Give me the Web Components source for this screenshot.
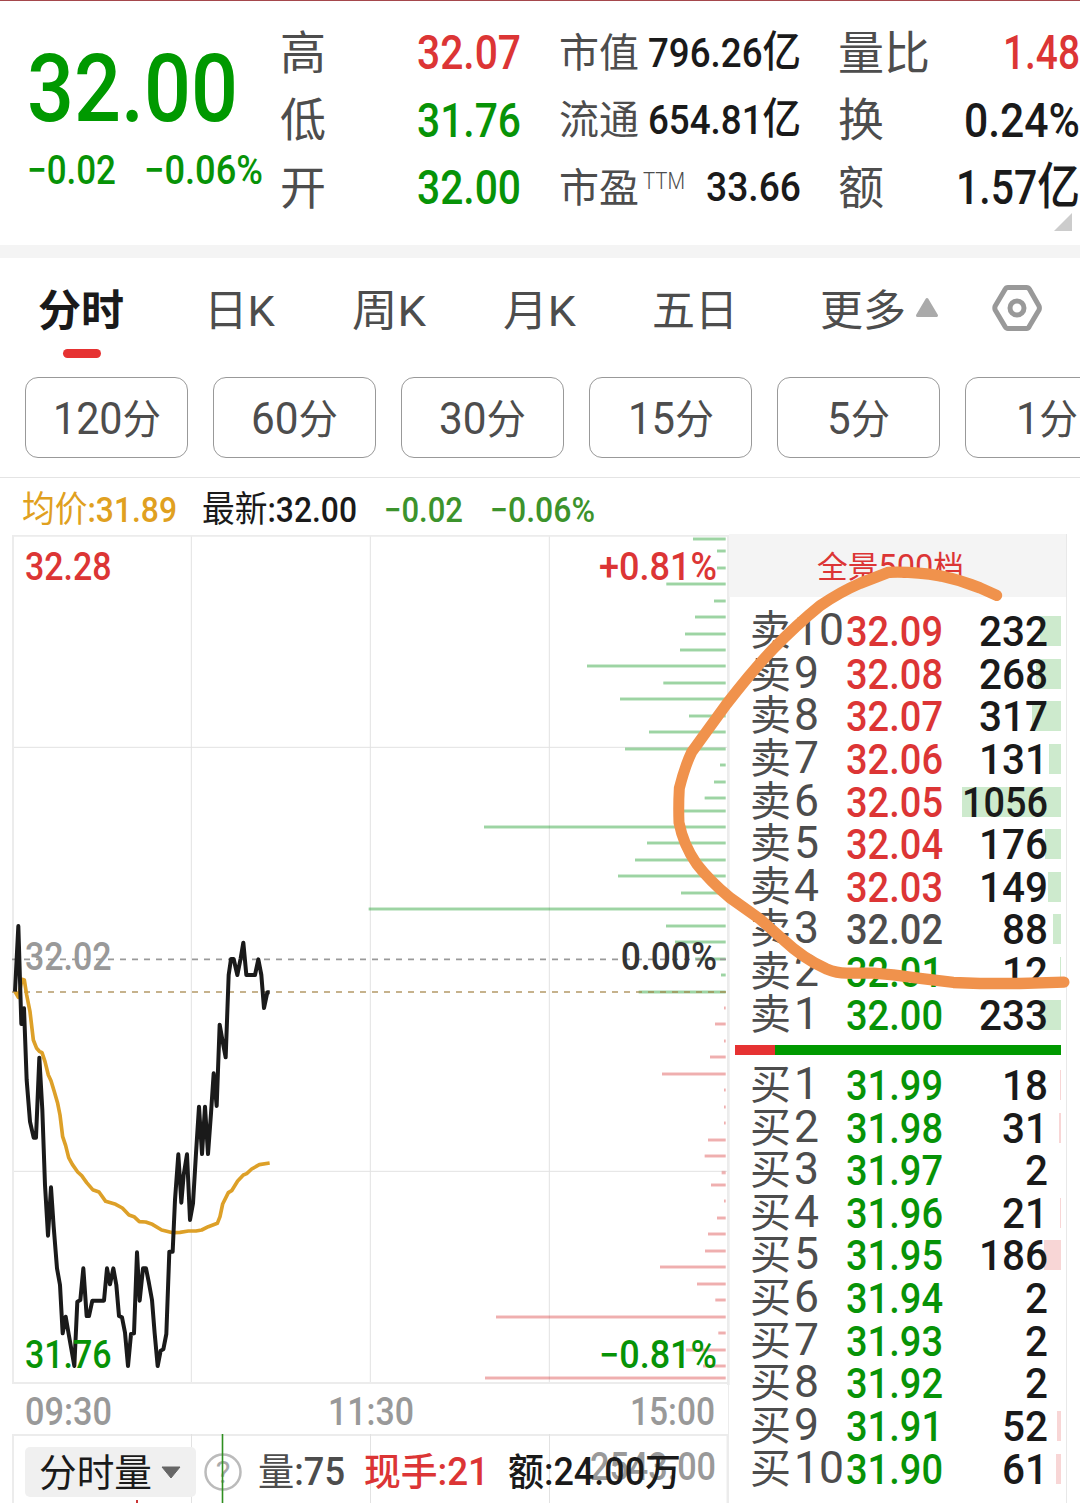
<!DOCTYPE html>
<html lang="zh-CN">
<head>
<meta charset="utf-8">
<title>分时</title>
<style>
    body {
        margin: 0;
        width: 1080px;
        height: 1503px;
        overflow: hidden;
        background: #fff;
        font-family: Roboto, "Noto Sans CJK SC", sans-serif;
        color: #1a1a1a;
    }
</style>
</head>
<body>
<stock-page></stock-page>
<script>
const RED = '#dc3535'
const GREEN = '#079307'

// base class: clones the class' markup into an open shadow root
class Base_Element extends HTMLElement {
    constructor() {
        super()
        const template = document.createElement('template')
        template.innerHTML = this.markup()
        this.attachShadow({ mode: 'open' })
        this.shadowRoot.appendChild( template.content.cloneNode(true) )
    }
}

//===[ Text squeezed or stretched to a fixed width ]===================

class Fit_Text extends Base_Element {
    markup() {
        return `
            <style>
                :host { display: block; white-space: nowrap; flex: none }
                span { display: inline-block; transform-origin: 0 50% }
                ::slotted(i) { font-style: normal; font-size: var(--cjk, 1em) }
            </style>
            <span><slot></slot></span>
        `
    }

    connectedCallback() {
        this.fit()
        document.fonts.ready.then(_ => this.fit())
    }

    fit() {
        const span = this.shadowRoot.querySelector('span')
        const width = Number(this.getAttribute('w'))
        this.style.width = width + 'px'
        span.style.transform = 'none'
        const natural = span.getBoundingClientRect().width
        if( natural )
            span.style.transform = `scaleX(${width / natural})`
    }
}

//===[ Quote header ]==================================================

class Quote_Header extends Base_Element {
    markup() {
        return `
            <style>
                :host {
                    display: grid;
                    grid-template-columns: 253px 279px 278px 242px;
                    box-sizing: border-box;
                    height: 258px;
                    padding-left: 28px;
                    border-top: 1px solid #a5474c;
                    border-bottom: 13px solid #f4f4f4;
                    position: relative;
                }
                .price { font-size: 95px; font-weight: 500; line-height: 100px; padding-top: 38px; color: #009900; margin-left: -1px }
                .change { display: flex; gap: 28px; font-size: 40px; font-weight: 500; line-height: 44px; padding-top: 10px; color: ${GREEN}; margin-left: -1px }
                .column { display: grid; grid-auto-rows: 67.5px; padding-top: 18px; align-content: start }
                .row { display: flex; justify-content: space-between; align-items: center; line-height: 67.5px; color: #4d4d4d; font-size: 46px }
                .row > span { padding-top: 1px }
                .row > fit-text { font-size: 48px; font-weight: 500; color: #1a1a1a; --cjk: 50px }
                .row > .red { color: ${RED} }
                .row > .green { color: ${GREEN} }
                .high { width: 241px; margin-left: -1px; padding-right: 1px }
                .cap { width: 242px; margin-left: -1px }
                .cap .row { font-size: 40px }
                .cap .row > fit-text { font-size: 41px; --cjk: 43px }
                .row div { display: flex; padding-top: 1px }
                sup { font-size: 23px; font-weight: 300; line-height: 54px; align-self: start; margin-left: 4px }
                .corner { position: absolute; right: 8px; bottom: 14px; width: 18px; height: 18px; background: #ccc; clip-path: polygon(100% 0, 100% 100%, 0 100%) }
            </style>
            <div>
                <div class="price"><fit-text w="211">32.00</fit-text></div>
                <div class="change"><fit-text w="89">−0.02</fit-text><fit-text w="119">−0.06%</fit-text></div>
            </div>
            <div class="column high">
                <div class="row"><span>高</span><fit-text class="red" w="104">32.07</fit-text></div>
                <div class="row"><span>低</span><fit-text class="green" w="104">31.76</fit-text></div>
                <div class="row"><span>开</span><fit-text class="green" w="104">32.00</fit-text></div>
            </div>
            <div class="column cap">
                <div class="row"><span>市值</span><fit-text w="153">796.26<i>亿</i></fit-text></div>
                <div class="row"><span>流通</span><fit-text w="153">654.81<i>亿</i></fit-text></div>
                <div class="row"><div>市盈<sup><fit-text w="42">TTM</fit-text></sup></div><fit-text w="95">33.66</fit-text></div>
            </div>
            <div class="column">
                <div class="row"><span>量比</span><fit-text class="red" w="77">1.48</fit-text></div>
                <div class="row"><span>换</span><fit-text w="116">0.24%</fit-text></div>
                <div class="row"><span>额</span><fit-text w="124">1.57<i>亿</i></fit-text></div>
            </div>
            <div class="corner"></div>
        `
    }
}

//===[ Period tabs ]===================================================

class Period_Tabs extends Base_Element {
    markup() {
        return `
            <style>
                :host {
                    display: grid;
                    grid-template-columns: 165px 148px 151px 149px 168px 97px 1fr;
                    height: 119px;
                    padding-left: 39px;
                    line-height: 106px;
                    font-size: 43px;
                    color: #4d4d4d;
                    box-sizing: border-box;
                }
                .active { color: #1a1a1a; font-weight: 700; width: 86px }
                .active span { display: block; margin-left: -1px }
                .active::after { content: ''; display: block; width: 38px; height: 9px; margin: -15px auto 0; border-radius: 5px; background: #e63232 }
                svg { display: block }
                .last { display: flex }
                .arrow { margin-top: 39px; margin-left: -2px }
                .settings { margin: 25px 0 0 52px }
            </style>
            <div class="active"><span>分时</span></div>
            <div><fit-text w="71">日K</fit-text></div>
            <div><fit-text w="74">周K</fit-text></div>
            <div><fit-text w="73">月K</fit-text></div>
            <div>五日</div>
            <div>更多</div>
            <div class="last">
                <svg class="arrow" width="24" height="21" viewBox="0 0 24 21"><path d="M12 2.500 L21.500 18.500 H2.500 Z" fill="#aaa" stroke="#aaa" stroke-width="3" stroke-linejoin="round"/></svg>
                <svg class="settings" width="52" height="50" viewBox="0 0 52 50" fill="none" stroke="#999" stroke-width="5" stroke-linejoin="round">
                    <path d="M17 4.500 H35.500 Q37.500 4.500 38.500 6.300 L48 23 Q48.800 25 48 27 L38.500 43 Q37.500 45.500 35.500 45.500 H17 Q15 45.500 14 43.500 L4.200 27 Q3.400 25 4.200 23 L14 6.500 Q15 4.500 17 4.500 Z"/>
                    <circle cx="26" cy="25" r="7"/>
                </svg>
            </div>
        `
    }
}

class Minute_Buttons extends Base_Element {
    markup() {
        const items = [['120分', 108], ['60分', 87], ['30分', 87], ['15分', 86], ['5分', 63], ['1分', 62]]
        return `
            <style>
                :host { display: flex; gap: 25px; height: 101px; padding-left: 25px; overflow: hidden; box-sizing: border-box; border-bottom: 1px solid #e4e4e4 }
                div {
                    flex: none;
                    width: 163px;
                    height: 81px;
                    box-sizing: border-box;
                    border: 1px solid #999;
                    border-radius: 13px;
                    display: flex;
                    justify-content: center;
                    line-height: 82px;
                    font-size: 44px;
                    color: #4d4d4d;
                    --cjk: 41px;
                }
            </style>
            ${items.map(([text, width]) => `<div><fit-text w="${width}">${text.replace('分', '<i>分</i>')}</fit-text></div>`).join('')}
        `
    }
}

class Price_Info extends Base_Element {
    markup() {
        return `
            <style>
                :host { display: flex; height: 56px; line-height: 65px; padding-left: 22px; font-size: 35px; font-weight: 500; color: #1a1a1a; --cjk: 36px; box-sizing: border-box }
                i { font-weight: 400 }
                .avg { color: #e0a020; margin-right: 25px }
                .green { color: #3c932c; margin-left: 27px }
            </style>
            <fit-text class="avg" w="155"><i>均价</i>:31.89</fit-text>
            <fit-text w="155"><i>最新</i>:32.00</fit-text>
            <fit-text class="green" w="79">−0.02</fit-text>
            <fit-text class="green" w="105">−0.06%</fit-text>
        `
    }
}

//===[ Intraday chart, three drawing units per pixel ]=================

const PRICE = '45,335 55,138 64,432 72,385 80,600 90,725 101,773 108,773 118,533 127,690 135,915 144,1067 153,922 161,1040 171,1165 180,1215 188,1360 197,1310 206,1362 223,1458 232,1265 241,1260 250,1165 260,1308 267,1308 277,1262 312,1262 321,1165 330,1213 340,1165 349,1215 357,1308 366,1312 375,1358 384,1458 393,1362 402,1360 411,1117 419,1262 429,1165 438,1165 446,1205 456,1260 464,1360 473,1458 482,1412 490,1408 499,1362 508,1115 518,1115 525,960 535,823 544,968 551,885 561,823 570,1020 579,970 588,820 597,680 606,822 615,680 624,822 633,700 641,580 650,678 659,434 668,485 677,532 686,285 693,237 701,237 712,285 722,235 730,188 739,285 765,285 775,238 784,285 792,384 802,337 809,337'
const AVERAGE = '45,335 55,352 66,298 73,300 80,345 90,395 100,480 110,505 118,514 126,518 135,545 145,585 153,602 163,635 173,670 180,705 188,770 197,797 206,833 217,853 233,876 245,887 260,908 278,929 297,936 317,964 347,973 367,984 387,1005 402,1010 418,1025 437,1026 457,1033 485,1050 518,1058 540,1057 565,1053 588,1053 605,1050 625,1040 652,1030 660,1010 668,972 685,938 695,932 713,903 730,885 740,881 755,867 778,854 809,849'
const SELL_BARS = [[999,27],[1071,63],[1071,114],[919,162],[1062,213],[1005,261],[975,312],[960,360],[681,408],[910,459],[780,507],[987,558],[867,606],[795,657],[1080,705],[1062,756],[1034,804],[960,843],[372,891],[861,939],[825,990],[774,1038],[963,1089],[26,1137],[918,1188],[945,1236],[1005,1287],[1083,1335],[836,1386]]
const BUY_BARS = [[1092,144],[1065,192],[1092,243],[1050,291],[906,342],[1092,390],[1092,441],[1092,489],[1044,540],[1034,588],[1085,638],[1053,675],[1092,723],[1071,774],[1044,822],[1035,873],[900,921],[1011,972],[1066,1020],[408,1071],[1075,1119],[978,1170],[1029,1218],[375,1254]]

class Intraday_Chart extends Base_Element {
    // soft outer bar with a darker core
    bars(list) {
        const d = list.map(([x, y]) => `M${x} ${y}H1097`).join('')
        return `<path d="${d}" stroke-width="11" opacity=".26"/><path d="${d}" stroke-width="6" opacity=".2"/>`
    }

    label(x, y, width, color, text) {
        return `<text x="${x}" y="${y}" textLength="${width}" lengthAdjust="spacingAndGlyphs" fill="${color}">${text}</text>`
    }

    markup() {
        return `
            <style>
                :host { display: block; height: 850px }
                svg { display: block }
                text { font-size: 114px; font-weight: 500; font-family: Roboto, sans-serif }
            </style>
            <svg width="730" height="850" viewBox="0 0 2190 2550" fill="none">
                <g stroke="#e2e2e2" stroke-width="3">
                    <path d="M574 3V2547 M1111 3V2547 M1648 3V2547 M36 637H2187 M36 1909H2187"/>
                    <path d="M36 2H2187 M39 2V2547 M36 2544H2187" stroke="#ececec" stroke-width="6"/>
                    <path d="M2185 2V2550" stroke="#ececec" stroke-width="8"/>
                </g>
                <g transform="translate(1080 -15)" stroke="#109520">${this.bars(SELL_BARS)}</g>
                <g transform="translate(1080 1275)" stroke="#d83b3b">${this.bars(BUY_BARS)}</g>
                <path d="M36 1273H2178" stroke="#999" stroke-width="5" stroke-dasharray="18 18"/>
                <path d="M36 1371H2178" stroke="#a08040" stroke-opacity=".8" stroke-width="5" stroke-dasharray="18 18"/>
                ${this.label(75, 1304, 260, '#999', '32.02')}
                <g transform="translate(0 1035)" stroke-linejoin="round">
                    <polyline points="${AVERAGE}" stroke="#dda028" stroke-width="11"/>
                    <polyline points="${PRICE}" stroke="#1a1a1a" stroke-width="12"/>
                </g>
                ${this.label(75, 136, 260, RED, '32.28')}
                ${this.label(75, 2498, 260, GREEN, '31.76')}
                ${this.label(1797, 136, 354, RED, '+0.81%')}
                ${this.label(1862, 1304, 289, '#333', '0.00%')}
                ${this.label(1797, 2498, 354, GREEN, '−0.81%')}
            </svg>
        `
    }
}

class Time_Axis extends Base_Element {
    markup() {
        return `
            <style>
                :host { display: flex; justify-content: space-between; height: 49px; padding: 0 13px 0 25px; line-height: 54px; font-size: 38px; font-weight: 500; color: #999; box-sizing: border-box; border-right: 1px solid #ececec }
            </style>
            <fit-text w="87">09:30</fit-text><fit-text w="86">11:30</fit-text><fit-text w="85">15:00</fit-text>
        `
    }
}

class Volume_Pane extends Base_Element {
    markup() {
        return `
            <style>
                :host { display: block; position: relative; height: 70px; overflow: hidden }
                .grid, .scale { position: absolute; top: 0; left: 0 }
                .scale { left: 590px; top: 9px; line-height: 48px; font-size: 38px; font-weight: 500; color: #999 }
                .bar { position: relative; display: flex; padding: 13px 0 0 25px; line-height: 51px; font-size: 38px; color: #4d4d4d }
                .select { display: flex; align-items: center; gap: 9px; width: 157px; padding-left: 14px; height: 50px; border-radius: 5px; background: #f0f0f0; color: #1a1a1a }
                .select fit-text { padding-top: 2px }
                .help { flex: none; margin: 6px 16px 0 8px }
                .medium { font-weight: 500 }
                .help text { font: 31px Roboto, sans-serif }
                i { font-weight: 400 }
            </style>
            <svg class="grid" width="730" height="70" viewBox="0 0 730 70" fill="none">
                <path d="M12 1H729 M13 0V70" stroke="#ececec" stroke-width="2"/>
                <path d="M728 0V70" stroke="#ececec" stroke-width="3"/>
                <path d="M191.500 0V70 M370.500 0V70 M549.500 0V70" stroke="#e2e2e2"/>
                <path d="M137 66V70" stroke="#c33" stroke-width="2"/>
            </svg>
            <div class="scale"><fit-text w="126">2543.00</fit-text></div>
            <div class="bar">
                <div class="select"><fit-text w="113">分时量</fit-text>
                    <svg width="20" height="13" viewBox="0 0 20 13"><path d="M1 1H19L10 12Z" fill="#666" stroke="#666" stroke-linejoin="round"/></svg>
                </div>
                <svg class="help" width="38" height="38" viewBox="0 0 38 38">
                    <circle cx="19" cy="19" r="17.500" fill="none" stroke="#bbb" stroke-width="2.500"/>
                    <text x="19" y="30" text-anchor="middle" fill="#aaa">?</text>
                </svg>
                <fit-text class="medium" w="87" style="margin-right: 19px"><i>量</i>:75</fit-text>
                <fit-text class="medium" w="125" style="margin-right: 19px; color: ${RED}">现手:21</fit-text>
                <fit-text class="medium" w="173" style="color: #1a1a1a">额:24.00万</fit-text>
            </div>
            <svg class="grid" width="730" height="70" viewBox="0 0 730 70" fill="none">
                <path d="M222.500 0V70" stroke="#2f8f20" stroke-opacity=".3" stroke-width="3"/>
                <path d="M222.500 0V70" stroke="#2f8f20"/>
            </svg>
        `
    }
}

//===[ Order book ]====================================================

const SELLS = [[10, '32.09', 232], [9, '32.08', 268], [8, '32.07', 317], [7, '32.06', 131], [6, '32.05', 1056], [5, '32.04', 176], [4, '32.03', 149], [3, '32.02', 88], [2, '32.01', 12], [1, '32.00', 233]]
const BUYS = [[1, '31.99', 18], [2, '31.98', 31], [3, '31.97', 2], [4, '31.96', 21], [5, '31.95', 186], [6, '31.94', 2], [7, '31.93', 2], [8, '31.92', 2], [9, '31.91', 52], [10, '31.90', 61]]
const PREVIOUS_CLOSE = 32.02

class Order_Book extends Base_Element {
    price_color(price) {
        if( price > PREVIOUS_CLOSE )
            return RED
        return price < PREVIOUS_CLOSE ? GREEN : '#4d4d4d'
    }

    volume_width(volume) {
        return volume > 999 ? 86 : String(volume).length * 23
    }

    rows(side, list, bar_color) {
        return list.map(([level, price, volume]) => `
            <div class="row">
                <div class="label">${side}<fit-text w="${level > 9 ? 50 : 25}">${level}</fit-text></div>
                <fit-text class="price" w="97" style="color: ${this.price_color(Number(price))}">${price}</fit-text>
                <div class="volume" style="--bar: ${Math.floor(volume / 1056 * 99)}px; --bar-color: ${bar_color}">
                    <fit-text w="${this.volume_width(volume)}">${volume}</fit-text>
                </div>
            </div>
        `).join('')
    }

    markup() {
        return `
            <style>
                :host { display: block; box-sizing: border-box; width: 338px; height: 969px; border-right: 1px solid #e8e8e8 }
                .title { height: 63px; display: flex; justify-content: center; padding-right: 14px; line-height: 66px; font-size: 33px; color: ${RED}; background: #f4f4f4; margin-bottom: 12px; --cjk: 31px }
                .row { display: flex; height: 42.650px; line-height: 44px; padding-left: 22px }
                .label { display: flex; width: 95px; font-size: 41px; color: #4d4d4d; margin-left: -1px; margin-right: 1px }
                .label fit-text { font-size: 45px; margin-left: 3px; line-height: 42px }
                .price { font-size: 43px; font-weight: 500 }
                .volume {
                    display: flex;
                    justify-content: flex-end;
                    width: 118px;
                    padding-right: 13px;
                    box-sizing: border-box;
                    font-size: 43px;
                    font-weight: 500;
                    background: linear-gradient(var(--bar-color), var(--bar-color)) right 7px / var(--bar) 30px no-repeat;
                }
                .ratio { height: 10px; margin: 9.500px 5px 8px 6px; background: linear-gradient(90deg, #e63232 40px, #009900 40px) }
            </style>
            <div class="title"><fit-text w="147"><i>全景</i>500<i>档</i></fit-text></div>
            ${this.rows('卖', SELLS, '#cdeacd')}
            <div class="ratio"></div>
            ${this.rows('买', BUYS, '#f8d6d6')}
        `
    }
}

//===[ Hand drawn pen mark ]===========================================

class Pen_Mark extends Base_Element {
    markup() {
        return `
            <style>
                :host { display: block; position: absolute; left: 660px; top: 530px }
                svg { display: block }
            </style>
            <svg width="420" height="480" viewBox="0 0 1260 1440" fill="none">
                <path transform="scale(1 1.033)" d="M1010 190 L960 168 Q900 145 840 133 Q760 120 685 123 L600 155 Q540 180 480 220 Q410 275 340 345 Q280 405 200 505 L140 585 L95 645 Q75 685 58 750 Q55 800 57 850 Q70 915 110 970 Q150 1020 210 1068 L300 1130 L370 1190 Q430 1245 500 1275 Q530 1287 560 1287 H640 L700 1292 L780 1302 L880 1314 L960 1317 H1080 L1212 1313" stroke="#f0924c" stroke-width="33" stroke-linecap="round" stroke-linejoin="round"/>
            </svg>
        `
    }
}

class Stock_Page extends Base_Element {
    markup() {
        return `
            <style>
                :host { display: block; position: relative; width: 1080px; height: 1503px; overflow: hidden }
                main { display: grid; grid-template-columns: 729px 338px }
                .left { padding-top: 1px }
            </style>
            <quote-header></quote-header>
            <period-tabs></period-tabs>
            <minute-buttons></minute-buttons>
            <price-info></price-info>
            <main>
                <div class="left">
                    <intraday-chart></intraday-chart>
                    <time-axis></time-axis>
                    <volume-pane></volume-pane>
                </div>
                <order-book></order-book>
            </main>
            <pen-mark></pen-mark>
        `
    }
}

customElements.define('fit-text', Fit_Text)
customElements.define('quote-header', Quote_Header)
customElements.define('period-tabs', Period_Tabs)
customElements.define('minute-buttons', Minute_Buttons)
customElements.define('price-info', Price_Info)
customElements.define('intraday-chart', Intraday_Chart)
customElements.define('time-axis', Time_Axis)
customElements.define('volume-pane', Volume_Pane)
customElements.define('order-book', Order_Book)
customElements.define('pen-mark', Pen_Mark)
customElements.define('stock-page', Stock_Page)
</script>
</body>
</html>
